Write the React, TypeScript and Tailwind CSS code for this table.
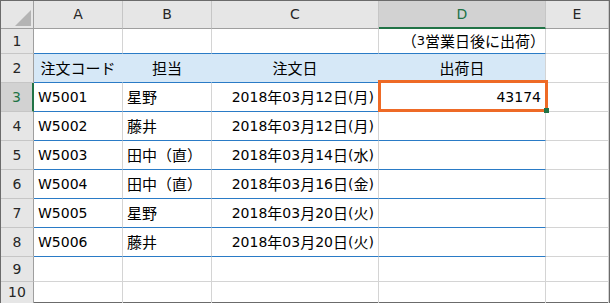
import React from "react";

const font = { fontFamily: '"Noto Sans CJK JP", "Liberation Sans", sans-serif' };

// Latin runs are set in DejaVu Sans a bit smaller, like Meiryo's wide Latin glyphs
function Txt({ s, latin = "text-[14px]" }: { s: string; latin?: string }) {
  const parts = s.split(/([\x20-\x7e]+)/).filter((p) => p !== "");
  return (
    <>
      {parts.map((p, i) =>
        /^[\x20-\x7e]+$/.test(p) ? (
          <span key={i} className={`font-['DejaVu_Sans'] ${latin}`}>
            {p}
          </span>
        ) : (
          <span key={i}>{p}</span>
        )
      )}
    </>
  );
}

const cols = ["A", "B", "C", "D", "E"];

const rows = [
  ["W5001", "星野", "2018年03月12日(月)", "43174"],
  ["W5002", "藤井", "2018年03月12日(月)", ""],
  ["W5003", "田中（直）", "2018年03月14日(水)", ""],
  ["W5004", "田中（直）", "2018年03月16日(金)", ""],
  ["W5005", "星野", "2018年03月20日(火)", ""],
  ["W5006", "藤井", "2018年03月20日(火)", ""],
];

function RowHead({ n, active }: { n: number; active?: boolean }) {
  return (
    <div
      className={`flex items-center justify-center border-b border-b-[#c6c6c6] ${
        active
          ? "bg-[#d2d2d2] text-[#217346] border-r-2 border-r-[#217346]"
          : "bg-[#e6e6e6] text-[#262626] border-r border-r-[#9f9f9f]"
      }`}
    >
      <Txt s={String(n)} />
    </div>
  );
}

function Cell({
  children,
  align = "left",
  blue,
  className = "",
}: {
  children?: React.ReactNode;
  align?: "left" | "right" | "center";
  blue?: boolean;
  className?: string;
}) {
  const justify =
    align === "right" ? "justify-end" : align === "center" ? "justify-center" : "justify-start";
  return (
    <div
      className={`flex items-center px-1 text-[15px] text-black whitespace-nowrap border-r border-r-[#d4d4d4] border-b ${
        blue ? "border-b-[#2a7bc6]" : "border-b-[#d4d4d4]"
      } ${justify} ${className}`}
    >
      {children}
    </div>
  );
}

export default function App() {
  return (
    <div className="w-[610px] h-[303px] bg-white overflow-hidden" style={font}>
      <div className="relative h-full border border-[#6b6b6b] grid grid-cols-[33px_89px_89px_167px_167px_1fr] grid-rows-[28px_25px_repeat(7,29px)_25px_1fr]">
        {/* column headers */}
        <div className="relative bg-[#e6e6e6] border-r border-r-[#9f9f9f] border-b border-b-[#9f9f9f]">
          <div className="absolute right-[2px] bottom-[2px] w-0 h-0 border-l-[16px] border-l-transparent border-b-[16px] border-b-[#b4b4b4]" />
        </div>
        {cols.map((c) => (
          <div
            key={c}
            className={`flex items-center justify-center border-r border-r-[#c6c6c6] ${
              c === "D"
                ? "bg-[#d2d2d2] text-[#217346] border-b-2 border-b-[#217346]"
                : "bg-[#e6e6e6] text-[#262626] border-b border-b-[#9f9f9f]"
            }`}
          >
            <Txt s={c} />
          </div>
        ))}

        {/* row 1 */}
        <RowHead n={1} />
        <Cell blue />
        <Cell blue />
        <Cell blue />
        <Cell blue align="right" className="text-[14px] pr-0">
          <Txt s="（3営業日後に出荷）" latin="text-[13px]" />
        </Cell>
        <Cell />

        {/* row 2 */}
        <RowHead n={2} />
        <Cell blue align="center" className="bg-[#d6e8f7] border-r-[#d6e8f7]">
          注文コード
        </Cell>
        <Cell blue align="center" className="bg-[#d6e8f7] border-r-[#d6e8f7]">
          担当
        </Cell>
        <Cell blue align="center" className="bg-[#d6e8f7] border-r-[#d6e8f7]">
          注文日
        </Cell>
        <Cell blue align="center" className="bg-[#d6e8f7]">
          出荷日
        </Cell>
        <Cell />

        {rows.map((r, i) => (
          <React.Fragment key={i}>
            <RowHead n={i + 3} active={i === 0} />
            <Cell blue>
              <Txt s={r[0]} />
            </Cell>
            <Cell blue>
              <Txt s={r[1]} />
            </Cell>
            <Cell blue align="right">
              <Txt s={r[2]} />
            </Cell>
            <Cell blue align="right">
              <Txt s={r[3]} />
            </Cell>
            <Cell />
          </React.Fragment>
        ))}

        {[9, 10].map((n) => (
          <React.Fragment key={n}>
            <RowHead n={n} />
            <Cell />
            <Cell />
            <Cell />
            <Cell />
            <Cell />
          </React.Fragment>
        ))}

        {/* active cell frame */}
        <div className="absolute left-[377px] top-[79px] w-[170px] h-[32px] border-[3px] border-[#ee6a26] pointer-events-none" />
        <div className="absolute left-[543px] top-[107px] w-[5px] h-[5px] bg-[#217346]" />
      </div>
    </div>
  );
}
